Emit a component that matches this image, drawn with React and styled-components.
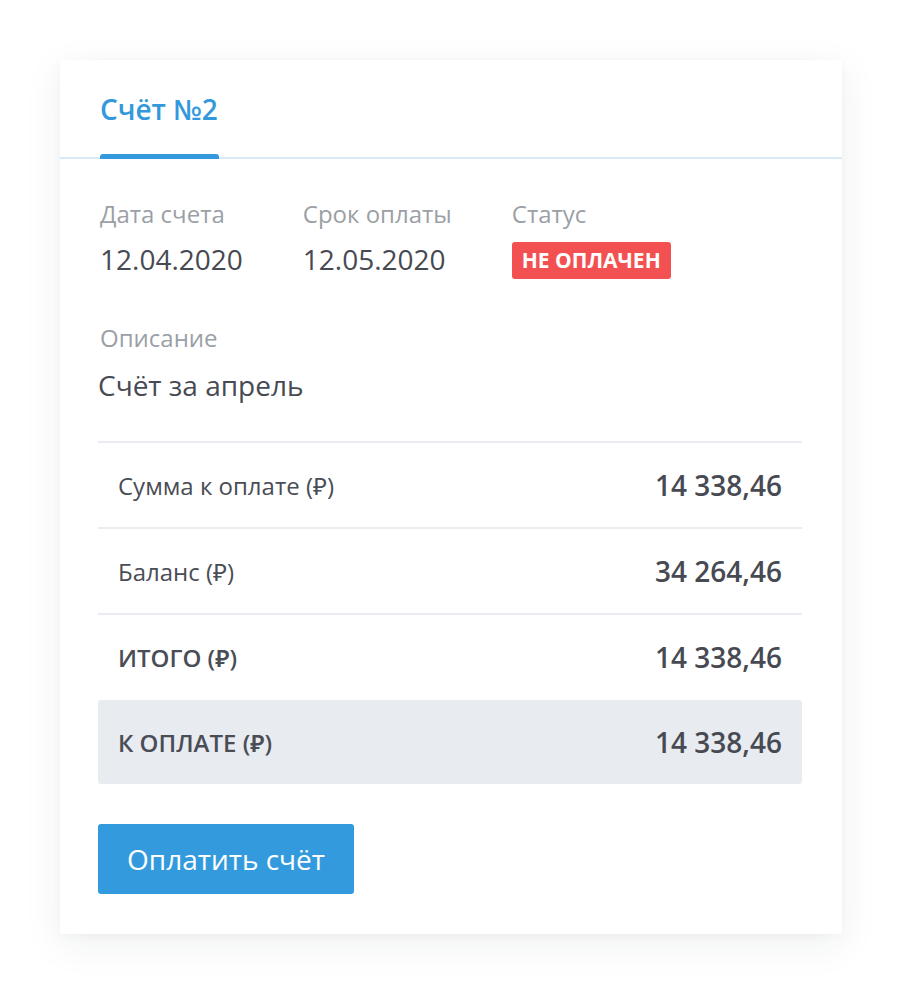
import React from "react";
import styled, { createGlobalStyle } from "styled-components";

const Global = createGlobalStyle`
  html, body { margin: 0; padding: 0; background: #ffffff; }
  body { font-family: "Open Sans", "Noto Sans", sans-serif; }
  * { box-sizing: border-box; }
`;

const Page = styled.div`
  padding: 60px;
`;

const Card = styled.div`
  width: 782px;
  background: #fff;
  border-radius: 3px;
  box-shadow: 0 10px 40px rgba(30, 40, 60, 0.07), 0 2px 10px rgba(30, 40, 60, 0.03);
`;

const Header = styled.div`
  display: flex;
  padding: 0 40px;
  border-bottom: 2px solid #d8eaf7;
`;

const Tab = styled.div`
  position: relative;
  padding: 30px 1px 29px 0;
  font-size: 28px;
  line-height: 38px;
  font-weight: 600;
  color: #3399dc;
  &::after {
    content: "";
    position: absolute;
    left: 0;
    right: 0;
    bottom: -2px;
    height: 5px;
    border-radius: 3px 3px 0 0;
    background: #3399dc;
  }
`;

const Body = styled.div`
  padding: 39px 40px 40px 38px;
`;

const Meta = styled.div`
  display: flex;
  gap: 60px;
  padding-left: 2px;
`;

const Field = styled.div`
  display: flex;
  flex-direction: column;
  gap: ${(p) => p.$gap ?? 10}px;
`;

const Label = styled.div`
  font-size: 24px;
  line-height: 32px;
  color: #9b9fa6;
`;

const Value = styled.div`
  font-size: 28px;
  line-height: 38px;
  color: #474a52;
  margin-left: ${(p) => p.$shift || 0}px;
`;

const Badge = styled.div`
  align-self: flex-start;
  background: #f35151;
  color: #fff;
  font-weight: 700;
  font-size: 21px;
  line-height: 37px;
  height: 37px;
  padding: 0 10px;
  border-radius: 3px;
  margin-top: 2px;
`;

const Description = styled.div`
  margin-top: 43px;
  padding-left: 2px;
`;

const Table = styled.div`
  margin-top: 37px;
  display: flex;
  flex-direction: column;
`;

const Row = styled.div`
  display: flex;
  justify-content: space-between;
  align-items: center;
  height: ${(p) => (p.$accent ? 84 : 86)}px;
  margin-top: ${(p) => (p.$accent ? 1 : 0)}px;
  padding: 0 20px;
  border-top: ${(p) => (p.$accent ? "none" : "2px solid #e9ecf0")};
  background: ${(p) => (p.$accent ? "#e8ebf0" : "transparent")};
  border-radius: ${(p) => (p.$accent ? "3px" : "0")};
`;

const RowLabel = styled.div`
  font-size: 24px;
  color: #4a4d55;
  font-weight: ${(p) => (p.$bold ? 600 : 400)};
`;

const RowValue = styled.div`
  font-size: 28px;
  font-weight: 600;
  color: #474a52;
`;

const PayButton = styled.button`
  display: block;
  margin-top: 40px;
  border: none;
  border-radius: 3px;
  background: #339bdd;
  color: #fff;
  font-family: inherit;
  font-size: 28px;
  height: 70px;
  padding: 0 29px;
  cursor: pointer;
`;

const rows = [
  { label: "Сумма к оплате (₽)", value: "14 338,46" },
  { label: "Баланс (₽)", value: "34 264,46" },
  { label: "ИТОГО (₽)", value: "14 338,46", bold: true },
  { label: "К ОПЛАТЕ (₽)", value: "14 338,46", bold: true, accent: true },
];

export default function App() {
  return (
    <Page>
      <Global />
      <Card>
        <Header>
          <Tab>Счёт №2</Tab>
        </Header>
        <Body>
          <Meta>
            <Field>
              <Label>Дата счета</Label>
              <Value>12.04.2020</Value>
            </Field>
            <Field>
              <Label>Срок оплаты</Label>
              <Value>12.05.2020</Value>
            </Field>
            <Field>
              <Label>Статус</Label>
              <Badge>НЕ ОПЛАЧЕН</Badge>
            </Field>
          </Meta>
          <Description>
            <Field $gap={12}>
              <Label>Описание</Label>
              <Value $shift={-2}>Счёт за апрель</Value>
            </Field>
          </Description>
          <Table>
            {rows.map((r) => (
              <Row key={r.label} $accent={r.accent}>
                <RowLabel $bold={r.bold}>{r.label}</RowLabel>
                <RowValue>{r.value}</RowValue>
              </Row>
            ))}
          </Table>
          <PayButton>Оплатить счёт</PayButton>
        </Body>
      </Card>
    </Page>
  );
}
